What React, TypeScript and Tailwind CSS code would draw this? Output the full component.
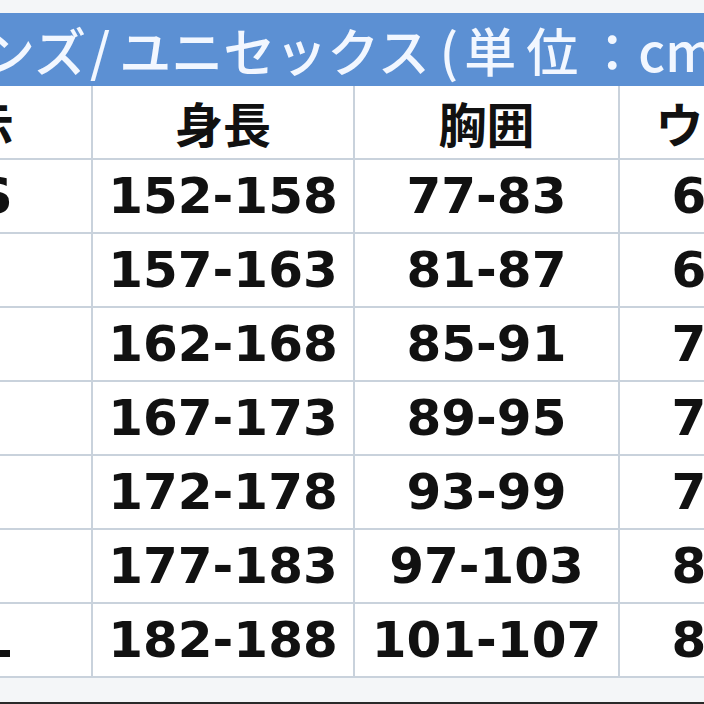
const SIZES = [
  { size: "SS", height: "152-158", chest: "77-83", waist: "63-69" },
  { size: "S", height: "157-163", chest: "81-87", waist: "67-73" },
  { size: "M", height: "162-168", chest: "85-91", waist: "71-77" },
  { size: "L", height: "167-173", chest: "89-95", waist: "75-81" },
  { size: "O", height: "172-178", chest: "93-99", waist: "79-85" },
  { size: "X", height: "177-183", chest: "97-103", waist: "83-89" },
  { size: "3L", height: "182-188", chest: "101-107", waist: "87-93" },
];

const jp = { fontFamily: '"Noto Sans CJK JP", "Noto Sans", sans-serif' };
const num = { fontFamily: '"DejaVu Sans", "Liberation Sans", sans-serif' };

const cell =
  "h-[74px] flex items-center justify-center border-r-2 border-b-2 border-[#c9d2dc] bg-white";

export default function App() {
  return (
    <div className="w-[704px] h-[704px] overflow-hidden bg-[#f4f6f8] flex flex-col pt-[13px]">
      {/* Title bar */}
      <div
        className="h-[73px] shrink-0 bg-[#5c90d3] flex items-center whitespace-nowrap text-[52px] font-medium text-[#f2f7ff] leading-none"
        style={jp}
      >
        <span className="-ml-[69px]">メンズ</span>
        <span className="ml-[4px] mr-[9px]">/</span>
        <span>ユニセックス</span>
        <span className="ml-[10px]">(</span>
        <span className="ml-[6px]">単</span>
        <span className="ml-[10px]">位</span>
        <span className="ml-[8px]">：</span>
        <span>cm)</span>
      </div>

      {/* Size table */}
      <div className="-ml-[135px] w-[1020px] shrink-0 grid grid-cols-[228px_262px_265px_265px] text-[#111]">
        <div className={`${cell} !justify-end pr-[77px] text-[48px] font-bold`} style={jp}>
          表示
        </div>
        <div className={`${cell} text-[48px] font-bold`} style={jp}>
          身長
        </div>
        <div className={`${cell} text-[48px] font-bold`} style={jp}>
          胸囲
        </div>
        <div className={`${cell} text-[48px] font-bold`} style={jp}>
          ウエスト
        </div>

        {SIZES.map((row) => (
          <div key={row.size} className="contents text-[50px] font-bold" style={num}>
            <div className={cell}>{row.size}</div>
            <div className={cell}>{row.height}</div>
            <div className={cell}>{row.chest}</div>
            <div className={cell}>{row.waist}</div>
          </div>
        ))}
      </div>

      <div className="flex-1" />
      <div className="h-[2px] shrink-0 bg-[#2a2a2a]" />
    </div>
  );
}
